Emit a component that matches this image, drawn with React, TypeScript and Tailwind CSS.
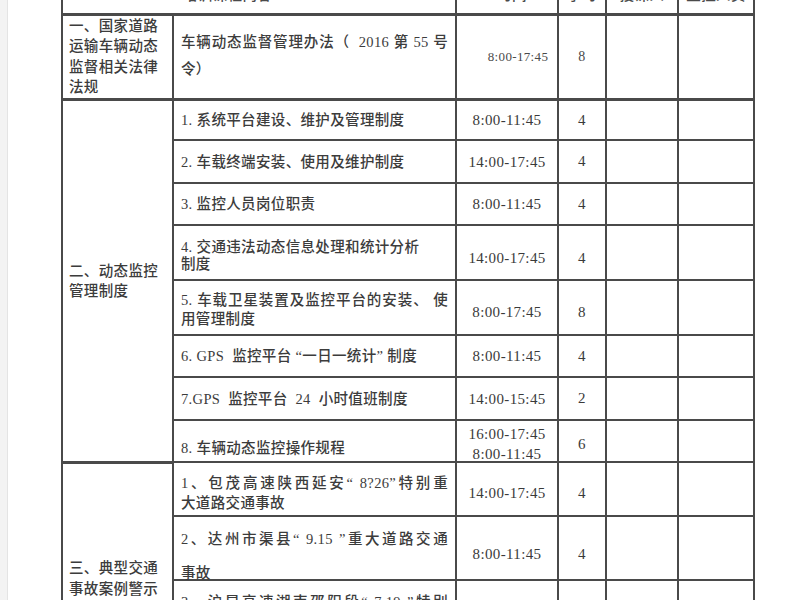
const cell = 'border-2 border-[#4a4a4a] p-0';
const text = 'text-[14.5px] tracking-[0.35px] text-[#3c3c3c] font-medium';

function Lines({ lines, leading, justifyFirst }: { lines: string[]; leading: string; justifyFirst?: boolean }) {
  return (
    <div className={`${leading} px-[7px]`}>
      {lines.map((l, i) => (
        <div
          key={i}
          className={i === 0 && justifyFirst && lines.length > 1 ? 'whitespace-pre [text-align-last:justify] text-justify' : 'whitespace-pre'}
        >
          {l}
        </div>
      ))}
    </div>
  );
}

type Row = {
  h: string;
  lines: string[];
  leading?: string;
  top?: string; // top padding when the text sits from the top
  time: string[];
  shift?: string; // pushes the time / hours down a little
  timeTop?: string;
  hours: string;
  justify?: boolean;
};

const section2: Row[] = [
  { h: 'h-[41px]', lines: ['1. 系统平台建设、维护及管理制度'], time: ['8:00-11:45'], hours: '4' },
  { h: 'h-[43px]', lines: ['2. 车载终端安装、使用及维护制度'], time: ['14:00-17:45'], hours: '4' },
  { h: 'h-[42px]', lines: ['3. 监控人员岗位职责'], time: ['8:00-11:45'], hours: '4' },
  { h: 'h-[55px]', lines: ['4. 交通违法动态信息处理和统计分析', '制度'], leading: 'leading-[17px]', top: 'pt-[13px]', time: ['14:00-17:45'], shift: 'pt-[11px]', hours: '4' },
  { h: 'h-[55px]', lines: ['5. 车载卫星装置及监控平台的安装、 使', '用管理制度'], leading: 'leading-[19px]', top: 'pt-[10px]', time: ['8:00-17:45'], shift: 'pt-[9px]', hours: '8', justify: true },
  { h: 'h-[42px]', lines: ['6. GPS  监控平台 “一日一统计” 制度'], time: ['8:00-11:45'], hours: '4' },
  { h: 'h-[43px]', lines: ['7.GPS  监控平台  24  小时值班制度'], time: ['14:00-15:45'], hours: '2' },
  { h: 'h-[42px]', lines: ['8. 车辆动态监控操作规程'], top: 'pt-[17px]', time: ['16:00-17:45', '8:00-11:45'], timeTop: 'pt-[3px]', shift: 'pt-[6px]', hours: '6' },
];

const section3: Row[] = [
  { h: 'h-[54px]', lines: ['1、包茂高速陕西延安“ 8?26”特别重', '大道路交通事故'], leading: 'leading-[20px]', top: 'pt-[10px]', time: ['14:00-17:45'], shift: 'pt-[8px]', hours: '4', justify: true },
  { h: 'h-[64px]', lines: ['2、达州市渠县“ 9.15 ”重大道路交通', '事故'], leading: 'leading-[34px]', top: 'pt-[5px]', time: ['8:00-11:45'], shift: 'pt-[12px]', hours: '4', justify: true },
  { h: 'h-[61px]', lines: ['3、沪昆高速湖南邵阳段“ 7.19 ”特别', '重大道路交通事故'], leading: 'leading-[22px]', top: 'pt-[10px]', time: ['14:00-17:45'], hours: '4', justify: true },
  { h: 'h-[55px]', lines: ['4、典型事故案例分析'], time: ['8:00-11:45'], hours: '4' },
];

function BodyRow({ r, section }: { r: Row; section?: React.ReactNode }) {
  const num = 'text-center text-[15px] font-normal text-[#3a3a3a]';
  return (
    <tr className={r.h}>
      {section}
      <td className={`${cell} ${r.top ? 'align-top' : 'align-middle'}`}>
        <div className={`${r.top ?? ''} -mb-[24px]`}>
          <Lines lines={r.lines} leading={r.leading ?? 'leading-[20px]'} justifyFirst={r.justify} />
        </div>
        {r.top ? null : <div className="h-[24px]" />}
      </td>
      {r.timeTop ? (
        <td className={`${cell} ${num} align-top`}>
          <div className={`${r.timeTop} -mb-[24px] leading-[20px]`}>
            {r.time.map(t => (
              <div key={t}>{t}</div>
            ))}
          </div>
        </td>
      ) : (
        <td className={`${cell} ${num} ${r.shift ?? ''} align-middle leading-[20px]`}>{r.time[0]}</td>
      )}
      <td className={`${cell} ${num} ${r.shift ?? ''} align-middle`}>{r.hours}</td>
      <td className={cell} />
      <td className={cell} />
    </tr>
  );
}

export default function App() {
  const head = `${cell} border-b-[3px] align-middle text-[#4a4a4a]`;
  return (
    <div className="relative h-[600px] w-[800px] overflow-hidden bg-white font-['Liberation_Serif','Noto_Sans_CJK_SC',serif]">
      <div className="flex h-full">
        <div className="w-[8px] shrink-0 border-r border-[#e4e4e4] bg-[#f3f3f3]" />
        <div className="-mt-[22px] ml-[53px]">
          <table className={`w-[692px] table-fixed border-collapse ${text}`}>
            <colgroup>
              <col className="w-[111px]" />
              <col className="w-[283px]" />
              <col className="w-[102px]" />
              <col className="w-[48px]" />
              <col className="w-[72px]" />
              <col className="w-[76px]" />
            </colgroup>
            <tbody>
              <tr className="h-[35px]">
                <td className={`${head} w-[111px] border-r-0`} />
                <td className={`${head} w-[283px] border-l-0 pl-[10px]`}>培训课程内容</td>
                <td className={`${head} pl-[10px] text-center`}>时间</td>
                <td className={`${head} text-center`}>学时</td>
                <td className={`${head} text-center`}>授课人</td>
                <td className={`${head} text-center`}>监控人员</td>
              </tr>

              <tr className="h-[85px]">
                <td className={`${cell} border-b-[3px] align-middle`}>
                  <div className="px-[6px] leading-[20.5px]">
                    <div>一、国家道路</div>
                    <div>运输车辆动态</div>
                    <div>监督相关法律</div>
                    <div>法规</div>
                  </div>
                </td>
                <td className={`${cell} border-b-[3px] pt-[13px] align-top`}>
                  <Lines lines={['车辆动态监督管理办法（  2016 第 55 号', '令）']} leading="leading-[27px]" justifyFirst />
                </td>
                <td className={`${cell} border-b-[3px] pl-[22px] text-center align-middle text-[13px] font-normal text-[#4a4a4a]`}>8:00-17:45</td>
                <td className={`${cell} border-b-[3px] text-center align-middle text-[14px] font-normal text-[#4a4a4a]`}>8</td>
                <td className={`${cell} border-b-[3px]`} />
                <td className={`${cell} border-b-[3px]`} />
              </tr>

              {section2.map((r, i) => (
                <BodyRow
                  key={r.lines[0]}
                  r={r}
                  section={
                    i === 0 ? (
                      <td rowSpan={section2.length} className={`${cell} align-middle`}>
                        <div className="px-[6px] leading-[20px]">
                          <div>二、动态监控</div>
                          <div>管理制度</div>
                        </div>
                      </td>
                    ) : undefined
                  }
                />
              ))}

              {section3.map((r, i) => (
                <BodyRow
                  key={r.lines[0]}
                  r={r}
                  section={
                    i === 0 ? (
                      <td rowSpan={section3.length} className={`${cell} border-t-[3px] align-middle`}>
                        <div className="px-[6px] leading-[21px]">
                          <div>三、典型交通</div>
                          <div>事故案例警示</div>
                        </div>
                      </td>
                    ) : undefined
                  }
                />
              ))}
            </tbody>
          </table>
        </div>
      </div>
    </div>
  );
}
